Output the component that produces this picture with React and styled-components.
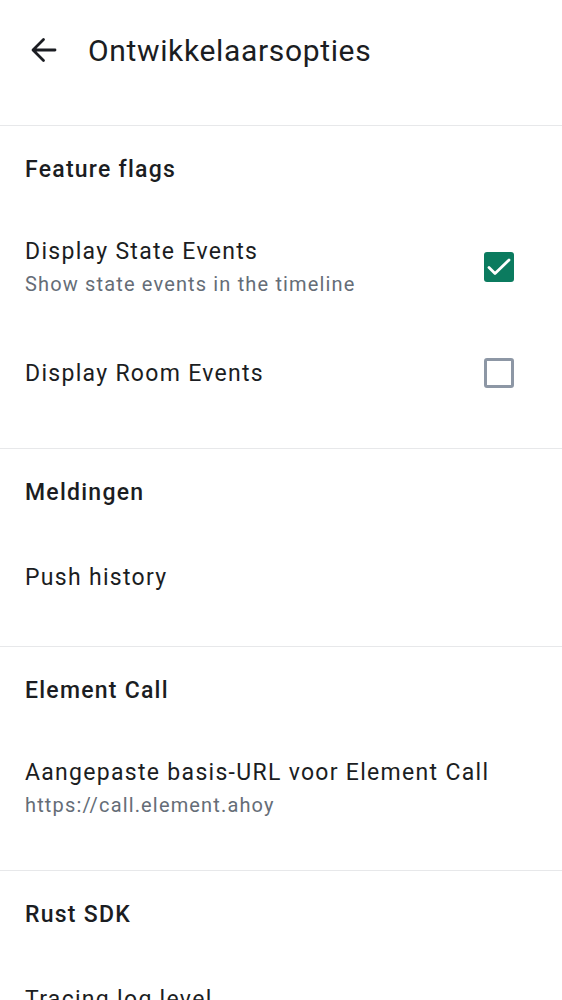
import React from 'react';
import styled, { createGlobalStyle } from 'styled-components';

const GlobalStyle = createGlobalStyle`
  html, body {
    margin: 0;
    padding: 0;
    background: #ffffff;
    font-family: Roboto, "Noto Sans", sans-serif;
    color: #1b1d22;
  }
`;

const Screen = styled.div`
  width: 562px;
  min-height: 1000px;
  background: #ffffff;
`;

const TopBar = styled.header`
  height: 100px;
  display: flex;
  align-items: center;
  padding-left: 26px;
  gap: 26px;
  margin-bottom: 25px;
`;

const BackButton = styled.button`
  width: 36px;
  height: 36px;
  padding: 0;
  border: none;
  background: transparent;
  display: flex;
  align-items: center;
  justify-content: center;
  color: #1b1d22;
`;

const Title = styled.h1`
  margin: 0;
  font-size: 30px;
  font-weight: 400;
  letter-spacing: 0.65px;
`;

const Section = styled.section`
  border-top: 1px solid #e7e8ea;
  padding-bottom: 25px;
`;

const SectionTitle = styled.h2`
  margin: 0;
  height: 86px;
  display: flex;
  align-items: center;
  padding: 0 25px;
  font-size: 23px;
  font-weight: 500;
  letter-spacing: 1.25px;
`;

const Item = styled.div`
  display: flex;
  align-items: center;
  min-height: ${(p) => p.$minHeight || 86}px;
  padding: 24px 48px 24px 25px;
  box-sizing: border-box;
`;

const ItemText = styled.div`
  flex: 1;
  display: flex;
  flex-direction: column;
`;

const ItemTitle = styled.div`
  font-size: 23px;
  line-height: 32px;
  letter-spacing: 1.3px;
`;

const ItemSub = styled.div`
  font-size: 20px;
  line-height: 32px;
  letter-spacing: 1.15px;
  color: #656d77;
`;

const Check = styled.span`
  width: 30px;
  height: 30px;
  margin-top: -2px;
  box-sizing: border-box;
  border-radius: 3px;
  display: flex;
  align-items: center;
  justify-content: center;
  background: ${(p) => (p.$on ? '#0b7b5f' : 'transparent')};
  border: ${(p) => (p.$on ? 'none' : '3px solid #8d97a5')};
`;

const Checkbox = ({ on }) => (
  <Check $on={on}>
    {on && (
      <svg width="30" height="30" viewBox="0 0 30 30">
        <path d="M5 15.5l6 6L25 8" fill="none" stroke="#fff" strokeWidth="2.8" strokeLinecap="round" strokeLinejoin="round" />
      </svg>
    )}
  </Check>
);

const BackArrow = () => (
  <svg width="26" height="26" viewBox="0 0 26 26">
    <path d="M24 13H2.5M12.5 2.5L2 13l10.5 10.5" fill="none" stroke="currentColor" strokeWidth="2.8" strokeLinecap="round" strokeLinejoin="round" />
  </svg>
);

const sections = [
  {
    title: 'Feature flags',
    items: [
      { title: 'Display State Events', sub: 'Show state events in the timeline', check: true },
      { title: 'Display Room Events', check: false, minHeight: 99 },
    ],
  },
  { title: 'Meldingen', items: [{ title: 'Push history' }] },
  {
    title: 'Element Call',
    items: [{ title: 'Aangepaste basis-URL voor Element Call', sub: 'https://call.element.ahoy' }],
  },
  { title: 'Rust SDK', items: [{ title: 'Tracing log level' }] },
];

export default function App() {
  return (
    <Screen>
      <GlobalStyle />
      <TopBar>
        <BackButton aria-label="Terug">
          <BackArrow />
        </BackButton>
        <Title>Ontwikkelaarsopties</Title>
      </TopBar>
      {sections.map((s) => (
        <Section key={s.title}>
          <SectionTitle>{s.title}</SectionTitle>
          {s.items.map((it) => (
            <Item key={it.title} $minHeight={it.minHeight}>
              <ItemText>
                <ItemTitle>{it.title}</ItemTitle>
                {it.sub && <ItemSub>{it.sub}</ItemSub>}
              </ItemText>
              {it.check !== undefined && <Checkbox on={it.check} />}
            </Item>
          ))}
        </Section>
      ))}
    </Screen>
  );
}
